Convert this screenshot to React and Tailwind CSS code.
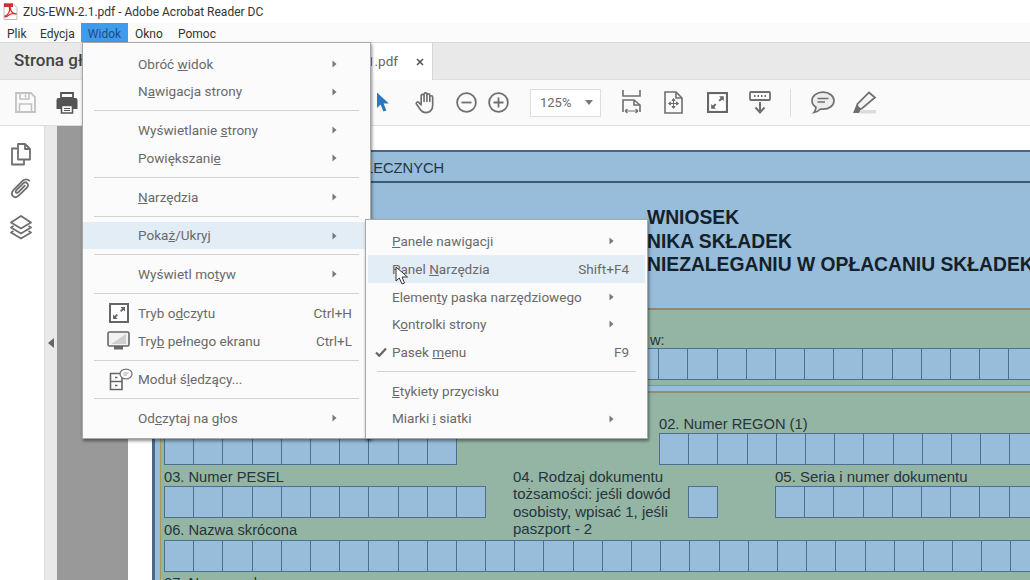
import React from "react";

const G = "#6f6f6f";

function Boxes({ n, className = "" }) {
  return (
    <div className={"flex h-[32px] " + className}>
      {Array.from({ length: n }).map((_, i) => (
        <div key={i} className="w-[30.2px] h-[32px] shrink-0 border border-[#4c7190] -ml-[1px] first:ml-0 bg-[#97bdda]" />
      ))}
    </div>
  );
}

function ReadIcon({ size = 20 }) {
  return (
    <svg width={size} height={size} viewBox="0 0 20 20" fill="none">
      <rect x="1" y="1" width="18" height="18" fill="#fff" stroke="#666" strokeWidth="2" />
      <path d="M11.5 4h4.5v4.5l-1.6-1.4-2.1 2-1.3-1.3 2-2.1zM8.5 16H4v-4.5l1.6 1.4 2.1-2 1.3 1.3-2 2.1z" fill="#666" />
    </svg>
  );
}

function Arrow() {
  return (
    <svg width="5" height="8" viewBox="0 0 5 8"><path d="M0.5 0.5L4.5 4L0.5 7.5Z" fill="#777" /></svg>
  );
}

function Sep() {
  return (
    <div className="h-[11.1px] flex items-center px-[11px]">
      <div className="h-px w-full bg-[#d2d2d2]" />
    </div>
  );
}

function Item({ children, arrow, shortcut, hl, icon, iconW, iconPl, endPad = "pr-[18px]" }) {
  return (
    <div className={"flex items-center h-[27.7px] text-[13.55px] text-[#6a6a6a] " + (hl ? "bg-[#e3edf6]" : "")}>
      <div className={"shrink-0 flex items-center " + iconW + " " + iconPl}>{icon}</div>
      <div className="flex-1 whitespace-nowrap">{children}</div>
      {arrow && <div className="pr-[33px] flex items-center"><Arrow /></div>}
      {shortcut && <div className={endPad}>{shortcut}</div>}
    </div>
  );
}

function MainItem(props) {
  return <Item iconW="w-[55px]" iconPl="pl-[26px]" {...props} />;
}
function SubItem(props) {
  return <Item iconW="w-[26px]" iconPl="pl-[9px]" {...props} />;
}

function MainMenu() {
  return (
    <div className="absolute left-[82px] top-[42px] w-[289px] h-[397px] bg-[#fbfbfb] border border-[#a8a8a8] pt-[7px] shadow-[1px_2px_3px_rgba(0,0,0,0.45)]">
      <MainItem arrow>Obróć <u>w</u>idok</MainItem>
      <MainItem arrow>N<u>a</u>wigacja strony</MainItem>
      <Sep />
      <MainItem arrow>Wyświetlanie <u>s</u>trony</MainItem>
      <MainItem arrow>Powiększani<u>e</u></MainItem>
      <Sep />
      <MainItem arrow><u>N</u>arzędzia</MainItem>
      <Sep />
      <MainItem arrow hl>Poka<u>ż</u>/Ukryj</MainItem>
      <Sep />
      <MainItem arrow>Wyświetl mo<u>t</u>yw</MainItem>
      <Sep />
      <MainItem shortcut="Ctrl+H" icon={<ReadIcon />}>Tryb o<u>d</u>czytu</MainItem>
      <MainItem
        shortcut="Ctrl+L"
        icon={
          <svg width="23" height="20" viewBox="0 0 23 20" fill="none" className="-ml-[2px]">
            <rect x="1" y="1" width="21" height="14" rx="1.5" fill="#f2f2f2" stroke="#666" strokeWidth="1.6" />
            <path d="M4 13L19 3V13Z" fill="#cfcfcf" />
            <rect x="7" y="15" width="9" height="3.5" fill="#666" />
          </svg>
        }
      >
        Try<u>b</u> pełnego ekranu
      </MainItem>
      <Sep />
      <MainItem
        icon={
          <svg width="24" height="23" viewBox="0 0 24 23" fill="none">
            <path d="M1.5 5.5H13V21.5H1.5Z" fill="#fff" stroke="#666" strokeWidth="1.6" />
            <path d="M1.5 13.5H13M6 9.5H8.5M6 17.5H8.5" stroke="#666" strokeWidth="1.4" />
            <ellipse cx="17" cy="6" rx="6" ry="4.8" fill="#fff" stroke="#777" strokeWidth="1.3" />
            <path d="M14.5 5H19.5M14.5 7H18" stroke="#999" strokeWidth="0.9" />
          </svg>
        }
      >
        Moduł ś<u>l</u>edzący...
      </MainItem>
      <Sep />
      <MainItem arrow>Od<u>c</u>zytaj na głos</MainItem>
    </div>
  );
}

function SubMenu() {
  return (
    <div className="absolute left-[365px] top-[219px] w-[283px] h-[220px] bg-[#fbfbfb] border border-[#a8a8a8] pt-[7.5px] shadow-[1px_2px_3px_rgba(0,0,0,0.45)]">
      <SubItem arrow><u>P</u>anele nawigacji</SubItem>
      <div className="mx-[2px]">
        <Item hl iconW="w-[24px]" iconPl="" endPad="pr-[16px]" shortcut="Shift+F4">Panel <u>N</u>arzędzia</Item>
      </div>
      <SubItem arrow>Elemen<u>t</u>y paska narzędziowego</SubItem>
      <SubItem arrow>K<u>o</u>ntrolki strony</SubItem>
      <SubItem
        shortcut="F9"
        icon={
          <svg width="12" height="10" viewBox="0 0 12 10"><path d="M1 5.5L4.3 8.8L11 1.5" fill="none" stroke="#666" strokeWidth="2.2" /></svg>
        }
      >
        Pasek <u>m</u>enu
      </SubItem>
      <Sep />
      <SubItem><u>E</u>tykiety przycisku</SubItem>
      <SubItem arrow>Miarki <u>i</u> siatki</SubItem>
    </div>
  );
}

function Toolbar() {
  return (
    <div className="h-[46px] shrink-0 flex items-center bg-[#fafafa] border-b border-[#dcdcdc] pl-[15px]">
      <svg width="21" height="21" viewBox="0 0 21 21" fill="none">
        <path d="M1 1H16L20 5V20H1Z" stroke="#c2c2c2" strokeWidth="1.8" fill="#fbfbfb" />
        <path d="M5 1V7H14V1M10.5 2.5V5.5M4.5 20V12H16.5V20" stroke="#c2c2c2" strokeWidth="1.6" />
      </svg>
      <svg width="22" height="22" viewBox="0 0 22 22" className="ml-[20px]">
        <path d="M5 1H17V6H5Z" fill="none" stroke="#555" strokeWidth="1.8" />
        <path d="M2.5 6H19.5A2 2 0 0 1 21.5 8V17H17V13H5V17H0.5V8A2 2 0 0 1 2.5 6Z" fill="#555" />
        <path d="M5.5 13.5H16.5V21H5.5Z" fill="#fff" stroke="#555" strokeWidth="1.6" />
        <path d="M8 16.5H14M8 18.5H14" stroke="#555" strokeWidth="1.1" />
      </svg>
      <svg width="14" height="21" viewBox="0 0 14 21" className="ml-[298px]">
        <path d="M1 0.5V16L4.6 12.6L7.4 19.6L10.4 18.4L7.6 11.6H12.8Z" fill="#2f75bc" />
      </svg>
      <svg width="23" height="23" viewBox="0 0 24 24" fill="none" stroke={G} strokeWidth="1.7" strokeLinecap="round" strokeLinejoin="round" className="ml-[24px]">
        <path d="M7.5 13V5a1.5 1.5 0 0 1 3 0v6M10.5 11V3.5a1.5 1.5 0 0 1 3 0V11M13.5 11V4.5a1.5 1.5 0 0 1 3 0V11M16.5 11V6.5a1.5 1.5 0 0 1 3 0V15c0 4.5-3 7.5-7 7.5-3.5 0-5-1.5-6.5-4L2.5 13.5c-.8-1.2 1-2.8 2.3-1.7L7.5 14.5" />
      </svg>
      <svg width="21" height="21" viewBox="0 0 21 21" fill="none" stroke={G} strokeWidth="1.8" className="ml-[19px]">
        <circle cx="10.5" cy="10.5" r="9.4" />
        <path d="M5.5 10.5H15.5" />
      </svg>
      <svg width="21" height="21" viewBox="0 0 21 21" fill="none" stroke={G} strokeWidth="1.8" className="ml-[11px]">
        <circle cx="10.5" cy="10.5" r="9.4" />
        <path d="M5.5 10.5H15.5M10.5 5.5V15.5" />
      </svg>
      <div className="ml-[21px] w-[71px] h-[28px] bg-white border border-[#dedede] flex items-center justify-between pl-[9px] pr-[7px] text-[13px] text-[#6a6a6a]">
        125%
        <svg width="8" height="5" viewBox="0 0 8 5"><path d="M0 0H8L4 5Z" fill="#777" /></svg>
      </div>
      <svg width="19" height="25" viewBox="0 0 19 25" fill="none" stroke={G} strokeWidth="1.6" className="ml-[21px]">
        <path d="M1 0V6H18V0" />
        <path d="M1 22V10H12L18 15V22" />
        <path d="M12 10V15H18" />
        <path d="M3 21H16M3 21L5.5 19M3 21L5.5 23M16 21L13.5 19M16 21L13.5 23" strokeWidth="1.2" />
      </svg>
      <svg width="19" height="23" viewBox="0 0 19 23" fill="none" stroke={G} strokeWidth="1.6" className="ml-[23px]">
        <path d="M1 1H12L18 7V22H1Z" />
        <path d="M12 1V7H18" />
        <path d="M9.5 8V17M5 12.5H14M9.5 7.5L8 9.5H11ZM9.5 17.5L8 15.5H11ZM4.5 12.5L6.5 11V14ZM14.5 12.5L12.5 11V14Z" strokeWidth="1" fill={G} />
      </svg>
      <div className="ml-[24px]"><ReadIcon size={21} /></div>
      <svg width="22" height="23" viewBox="0 0 22 23" fill="none" className="ml-[21px]">
        <rect x="1" y="1" width="20" height="8" rx="1" stroke={G} strokeWidth="1.8" />
        <path d="M5 5H6.5M8.5 5H10M12 5H13.5M15.5 5H17" stroke={G} strokeWidth="1.8" />
        <path d="M11 11V21M6.5 16.5L11 21.5L15.5 16.5" stroke={G} strokeWidth="2" />
      </svg>
      <div className="ml-[19px] w-px h-[28px] bg-[#dcdcdc]" />
      <svg width="24" height="23" viewBox="0 0 24 23" fill="none" className="ml-[20px]">
        <path d="M12 1.2C5.8 1.2 1 4.8 1 9.8c0 2.8 1.5 5 4 6.5-.2 2-1 3.8-2 5.2 3-.6 5-2 6.5-3.5.8.1 1.7.2 2.5.2 6.2 0 11-3.8 11-8.4S18.2 1.200 12 1.200Z" fill="#ededed" stroke={G} strokeWidth="1.7" />
        <path d="M6.5 7.5H17.5M6.5 11H14" stroke={G} strokeWidth="1.3" />
      </svg>
      <svg width="25" height="23" viewBox="0 0 25 23" fill="none" className="ml-[17px]">
        <path d="M17 1.5L23 6.5L10 17.5L4.5 18L5.5 13Z" fill="#f4f4f4" stroke={G} strokeWidth="1.7" />
        <path d="M4.5 13.5L1 22H7L9.5 18Z" fill={G} />
        <rect x="8" y="19" width="16" height="3.5" fill="#dcdcdc" />
      </svg>
    </div>
  );
}

function Sidebar() {
  return (
    <div className="w-[45px] shrink-0 bg-white border-r border-[#dcdcdc] flex flex-col items-center pt-[17px] pr-[2px]">
      <svg width="20" height="23" viewBox="0 0 20 23" fill="none" stroke={G} strokeWidth="1.8" strokeLinejoin="round">
        <path d="M7 1H14L19 6V16.5H7Z" />
        <path d="M14 1V6H19" />
        <path d="M7 5.5H1V21.5H13V16.5" />
      </svg>
      <svg width="22" height="23" viewBox="0 0 24 24" fill="none" stroke={G} strokeWidth="2" strokeLinecap="round" strokeLinejoin="round" className="mt-[11px]">
        <path d="M21 3.5c-2-2-5-2-7 0L4.2 13.3c-3 3-2.4 5.5-1 7 1.5 1.4 4 1.9 6.8-1L18.5 11c1.5-1.5 1.5-3.5.3-4.7-1.2-1.2-3.2-1.2-4.7.3L7 13.8c-1 1-1 2-.4 2.6.6.6 1.6.6 2.6-.4L16 9" />
      </svg>
      <svg width="22" height="25" viewBox="0 0 22 25" fill="none" stroke={G} strokeWidth="1.8" strokeLinejoin="round" className="mt-[15px]">
        <path d="M11 1L21 7.5L11 13.5L1 7.5Z" />
        <path d="M3.5 11L1 12.5L11 18.5L21 12.5L18.5 11" />
        <path d="M3.5 16L1 17.5L11 23.5L21 17.5L18.5 16" />
      </svg>
    </div>
  );
}

function Form() {
  return (
    <div className="w-[1000px] font-['Liberation_Sans',sans-serif] text-[14.7px] leading-[18px] text-[#26343c] border-l-[3px] border-t-2 border-[#4a6685] bg-[#97bdda]">
      <div className="h-[31px] border-b-2 border-[#3f5a73] flex items-center pl-[210px] pt-[3px]">ŁECZNYCH</div>
      <div className="h-[125px] pl-[492px] pt-[23px] font-bold text-[#14202a] text-[19.3px] leading-[23.5px] whitespace-nowrap">
        <div>WNIOSEK</div>
        <div>NIKA SKŁADEK</div>
        <div>NIEZALEGANIU W OPŁACANIU SKŁADEK</div>
      </div>
      <div className="ml-[5px] border-l border-[#a89a5a]">
        <div className="h-[78px] border-t-2 border-b border-t-[#94866a] border-b-[#a4905a] bg-[#94b4a4] pt-[21px]">
          <div className="pl-[489px] h-[17px]">w:</div>
          <Boxes n={20} className="ml-[322px]" />
        </div>
        <div className="h-[5px]" />
        <div className="border-t-2 border-[#9a8a6e] bg-[#94b4a4] pl-[3px]">
          <div className="flex items-end h-[72px]">
            <div className="w-[495px] shrink-0"><Boxes n={10} /></div>
            <div>
              <div className="h-[18px]">02. Numer REGON (1)</div>
              <Boxes n={13} />
            </div>
          </div>
          <div className="flex h-[75px] pt-[1px]">
            <div className="w-[349px] shrink-0">
              <div className="h-[20px] pt-[2px]">03. Numer PESEL</div>
              <Boxes n={11} />
              <div className="mt-[3px]">06. Nazwa skrócona</div>
            </div>
            <div className="w-[175px] shrink-0 leading-[17.4px] text-[15px] pt-[2px] whitespace-nowrap">
              04. Rodzaj dokumentu<br />tożsamości: jeśli dowód<br />osobisty, wpisać 1, jeśli<br />paszport - 2
            </div>
            <div className="w-[87px] shrink-0 pt-[20px]">
              <Boxes n={1} />
            </div>
            <div>
              <div className="h-[20px] pt-[2px] whitespace-nowrap text-[15px]">05. Seria i numer dokumentu</div>
              <Boxes n={9} />
            </div>
          </div>
          <Boxes n={32} />
          <div className="mt-[2px]">07. Nazwa pełna</div>
        </div>
      </div>
    </div>
  );
}

export default function App() {
  return (
    <div className="relative w-[1030px] h-[580px] overflow-hidden bg-white flex flex-col font-['Roboto',sans-serif]">
      <div className="h-[23px] shrink-0 flex items-center pl-[2px] text-[12px] text-[#333]">
        <svg width="17" height="17" viewBox="0 0 17 17">
          <path d="M2 0.5H11L15 4.5V16.5H2Z" fill="#fff" stroke="#bbb" />
          <path d="M2 0.5H11V4H2Z" fill="#c9332c" />
          <path d="M3 13C6 12 8.5 8 7.5 5C7 3.5 8.5 3.5 8.5 5.5C8.5 8 11 11 14.5 11C12 10 8 11 5.5 13C4 14.5 2.5 14 3 13Z" fill="none" stroke="#d2322d" strokeWidth="1.3" />
        </svg>
        <span className="ml-[4px] whitespace-nowrap">ZUS-EWN-2.1.pdf - Adobe Acrobat Reader DC</span>
      </div>
      <div className="h-[19px] shrink-0 flex items-center text-[12px] text-[#333] bg-[#fbfbfb] pl-[7px]">
        <span className="w-[33px] pt-[2px]">Plik</span>
        <span className="w-[41px] pt-[2px]">Edycja</span>
        <span className="w-[47px] h-[19px] pt-[2px] bg-[#3f9bec] text-[#1f4f7c] flex items-center justify-center">Widok</span>
        <span className="w-[50px] pl-[7px] pt-[2px]">Okno</span>
        <span className="pt-[2px]">Pomoc</span>
      </div>
      <div className="h-[38px] shrink-0 flex bg-[#e9e9e9] border-t border-[#d8d8d8] border-b border-b-[#e0e0e0]">
        <div className="w-[14px]" />
        <div className="w-[290px] flex items-center font-medium text-[17px] text-[#444] whitespace-nowrap">Strona główna</div>
        <div className="w-[129px] -mb-px bg-white border-r border-[#d6d6d6] flex items-center justify-end pr-[8px] text-[13.5px] text-[#666] whitespace-nowrap">
          1.pdf
          <svg width="8" height="8" viewBox="0 0 8 8" className="ml-[18px]"><path d="M1 1L7 7M7 1L1 7" stroke="#555" strokeWidth="1.6" /></svg>
        </div>
      </div>
      <Toolbar />
      <div className="flex-1 flex min-h-0">
        <Sidebar />
        <div className="w-[12px] shrink-0 bg-[#e9e9e9] flex items-center justify-start pl-[3px] pb-[20px]">
          <svg width="6" height="10" viewBox="0 0 6 10"><path d="M6 0V10L0 5Z" fill="#666" /></svg>
        </div>
        <div className="w-[71px] shrink-0 bg-[#999]" />
        <div className="flex-1 bg-white pt-[24px] pl-[24px] overflow-hidden">
          <Form />
        </div>
      </div>
      <MainMenu />
      <SubMenu />
      <svg width="14" height="19" viewBox="0 0 14 19" className="absolute left-[395px] top-[266px]">
        <path d="M1 1V15L4.3 12L7 18L9.5 17L7 11H12.5Z" fill="#fff" stroke="#333" strokeWidth="1" strokeLinejoin="round" />
      </svg>
    </div>
  );
}
